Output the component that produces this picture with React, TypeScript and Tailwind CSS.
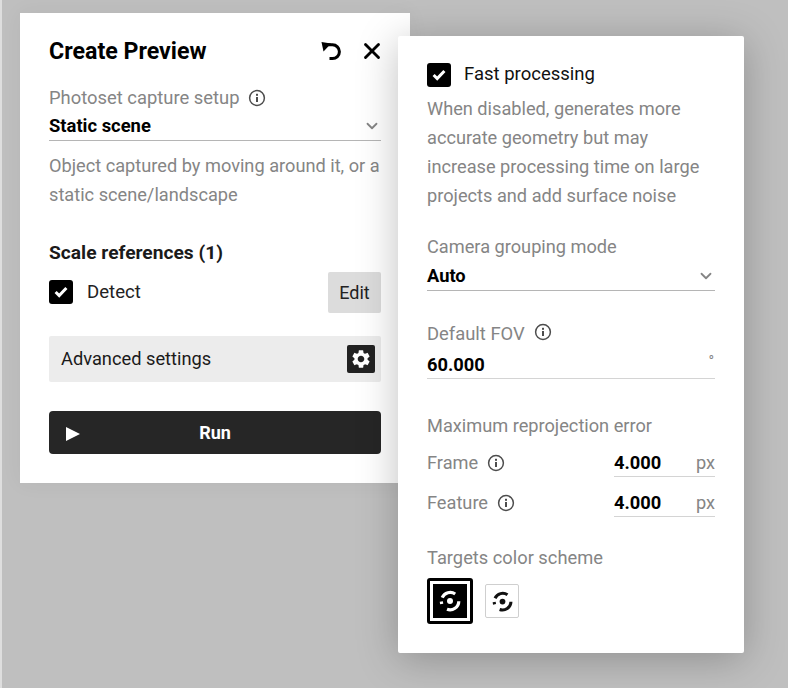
import { X, ChevronDown } from 'lucide-react';
import { MdSettings } from 'react-icons/md';

function InfoIcon() {
  return (
    <svg width="18" height="18" viewBox="0 0 18 18" fill="none" className="shrink-0">
      <circle cx="9" cy="9" r="7.4" stroke="#4d4d4d" strokeWidth="1.5" />
      <rect x="8" y="8" width="2" height="5" fill="#4d4d4d" />
      <rect x="8" y="4.8" width="2" height="2" fill="#4d4d4d" />
    </svg>
  );
}

function Check() {
  return (
    <div className="w-[24px] h-[24px] rounded-[3px] bg-black flex items-center justify-center shrink-0">
      <svg width="14" height="12" viewBox="0 0 14 12" fill="none">
        <path d="M1.6 6 5.2 9.6 12.4 2" stroke="#fff" strokeWidth="3" />
      </svg>
    </div>
  );
}

function UndoIcon() {
  return (
    <svg width="24" height="24" viewBox="0 0 24 24" fill="none" className="mr-[15px]">
      <path d="M1.5 3 11 4.5 3.5 12.5Z" fill="#000" />
      <path d="M7 5.8H12.5A6.9 6.9 0 0 1 12.5 19.6H9.5" stroke="#000" strokeWidth="3" />
    </svg>
  );
}

function TargetIcon({ color, size }: { color: string; size: number }) {
  return (
    <svg width={size} height={size} viewBox="0 0 24 24" fill="none">
      <circle cx="12" cy="12" r="3" fill={color} />
      <path d="M3.3 12.6 3.7 15" stroke={color} strokeWidth="3.2" />
      <path d="M4.2 8.6A8.8 8.8 0 0 1 17.2 5" stroke={color} strokeWidth="3.2" />
      <path d="M20.8 12.2A8.8 8.8 0 0 1 9 20.3" stroke={color} strokeWidth="3.2" />
    </svg>
  );
}

function SmallField({ label }: { label: string }) {
  return (
    <div className="flex items-center h-[40px]">
      <div className="flex items-center gap-[9px] text-[18.2px] text-[#858585] w-[187px]">
        {label}
        <InfoIcon />
      </div>
      <div className="flex-1 flex items-center justify-between h-[28px] border-b border-[#d4d4d4]">
        <span className="text-[18.3px] font-bold text-black">4.000</span>
        <span className="text-[18.2px] text-[#858585]">px</span>
      </div>
    </div>
  );
}

export default function App() {
  return (
    <div className="relative w-[788px] h-[688px] overflow-hidden bg-[#bfbfbf] border-l-2 border-[#dedede] flex font-['Roboto',sans-serif]">
      <div className="ml-[18px] mt-[13px] w-[390px] h-[470px] shrink-0 bg-white pl-[29px] pr-[29px] pt-[22px] shadow-[0_0_20px_rgba(0,0,0,0.05)]">
        <div className="flex items-center h-[32px]">
          <h1 className="text-[23.2px] font-bold text-black flex-1">Create Preview</h1>
          <UndoIcon />
          <X className="w-[26px] h-[26px] text-black -mr-[4px]" strokeWidth={2.6} />
        </div>
        <div className="mt-[19px] flex items-center gap-[8px] text-[18.4px] text-[#858585] h-[24px]">
          Photoset capture setup
          <InfoIcon />
        </div>
        <div className="flex items-center justify-between h-[31px] pt-[1px] border-b border-[#b5b5b5]">
          <span className="text-[18.4px] font-bold text-black">Static scene</span>
          <ChevronDown className="w-[18px] h-[18px] text-[#858585]" strokeWidth={2.4} />
        </div>
        <p className="mt-[10px] text-[18.2px] leading-[29px] text-[#858585]">
          Object captured by moving around it, or a static scene/landscape
        </p>
        <div className="mt-[31px] text-[19.2px] font-bold text-[#1a1a1a] h-[26px] leading-[26px]">Scale references (1)</div>
        <div className="mt-[6px] flex items-center justify-between">
          <div className="flex items-center gap-[14px]">
            <Check />
            <span className="text-[18.6px] text-[#222] pt-[1px]">Detect</span>
          </div>
          <div className="w-[53px] h-[41px] rounded-[2px] bg-[#dcdcdc] flex items-center justify-center text-[18px] text-[#222]">Edit</div>
        </div>
        <div className="mt-[23px] h-[46px] rounded-[2px] bg-[#ececec] flex items-center justify-between pl-[12px] pr-[6px]">
          <span className="text-[18.25px] text-[#1a1a1a]">Advanced settings</span>
          <div className="w-[28px] h-[28px] rounded-[2px] bg-[#222] flex items-center justify-center">
            <MdSettings className="w-[22px] h-[22px] text-white" />
          </div>
        </div>
        <div className="mt-[29px] h-[43px] rounded-[4px] bg-[#262626] flex items-center relative justify-center">
          <svg width="14" height="14" viewBox="0 0 14 14" className="absolute left-[17px] top-[16px]">
            <path d="M0 0 14 7 0 14Z" fill="#fff" />
          </svg>
          <span className="text-[18px] font-bold text-white">Run</span>
        </div>
      </div>

      <div className="-ml-[12px] mt-[36px] w-[346px] h-[617px] shrink-0 bg-white rounded-[2px] shadow-[0_6px_40px_rgba(0,0,0,0.25)] pl-[29px] pr-[29px] pt-[26px] z-10">
        <div className="flex items-center gap-[13px] h-[26px]">
          <Check />
          <span className="text-[18.5px] text-[#111]">Fast processing</span>
        </div>
        <p className="mt-[6px] text-[18.2px] leading-[29px] text-[#858585]">
          When disabled, generates more accurate geometry but may increase processing time on large projects and add surface noise
        </p>
        <div className="mt-[25px] text-[18.2px] text-[#858585] h-[26px] leading-[24px]">Camera grouping mode</div>
        <div className="flex items-center justify-between h-[30px] border-b border-[#b5b5b5]">
          <span className="text-[18.3px] font-bold text-black">Auto</span>
          <ChevronDown className="w-[18px] h-[18px] text-[#858585]" strokeWidth={2.4} />
        </div>
        <div className="mt-[29px] flex items-start gap-[9px] text-[18.4px] text-[#858585] h-[28px]">
          Default FOV
          <span className="mt-[3px]"><InfoIcon /></span>
        </div>
        <div className="flex items-center justify-between h-[31px] pt-[3px] border-b border-[#d4d4d4]">
          <span className="text-[18.3px] font-bold text-black">60.000</span>
          <span className="text-[15px] text-[#858585] -mt-[6px] mr-[1px]">°</span>
        </div>
        <div className="mt-[35px] text-[18.2px] text-[#858585] h-[24px] leading-[24px]">Maximum reprojection error</div>
        <div className="mt-[5px]">
          <SmallField label="Frame" />
          <SmallField label="Feature" />
        </div>
        <div className="mt-[23px] text-[18.3px] text-[#858585] h-[24px] leading-[24px]">Targets color scheme</div>
        <div className="mt-[8px] flex items-center gap-[12px]">
          <div className="w-[46px] h-[46px] rounded-[3px] border-[3px] border-black p-[3px]">
            <div className="w-full h-full bg-black flex items-center justify-center">
              <TargetIcon color="#fff" size={24} />
            </div>
          </div>
          <div className="w-[34px] h-[34px] rounded-[2px] border border-[#cfcfcf] bg-white flex items-center justify-center">
            <TargetIcon color="#111" size={23} />
          </div>
        </div>
      </div>
    </div>
  );
}
